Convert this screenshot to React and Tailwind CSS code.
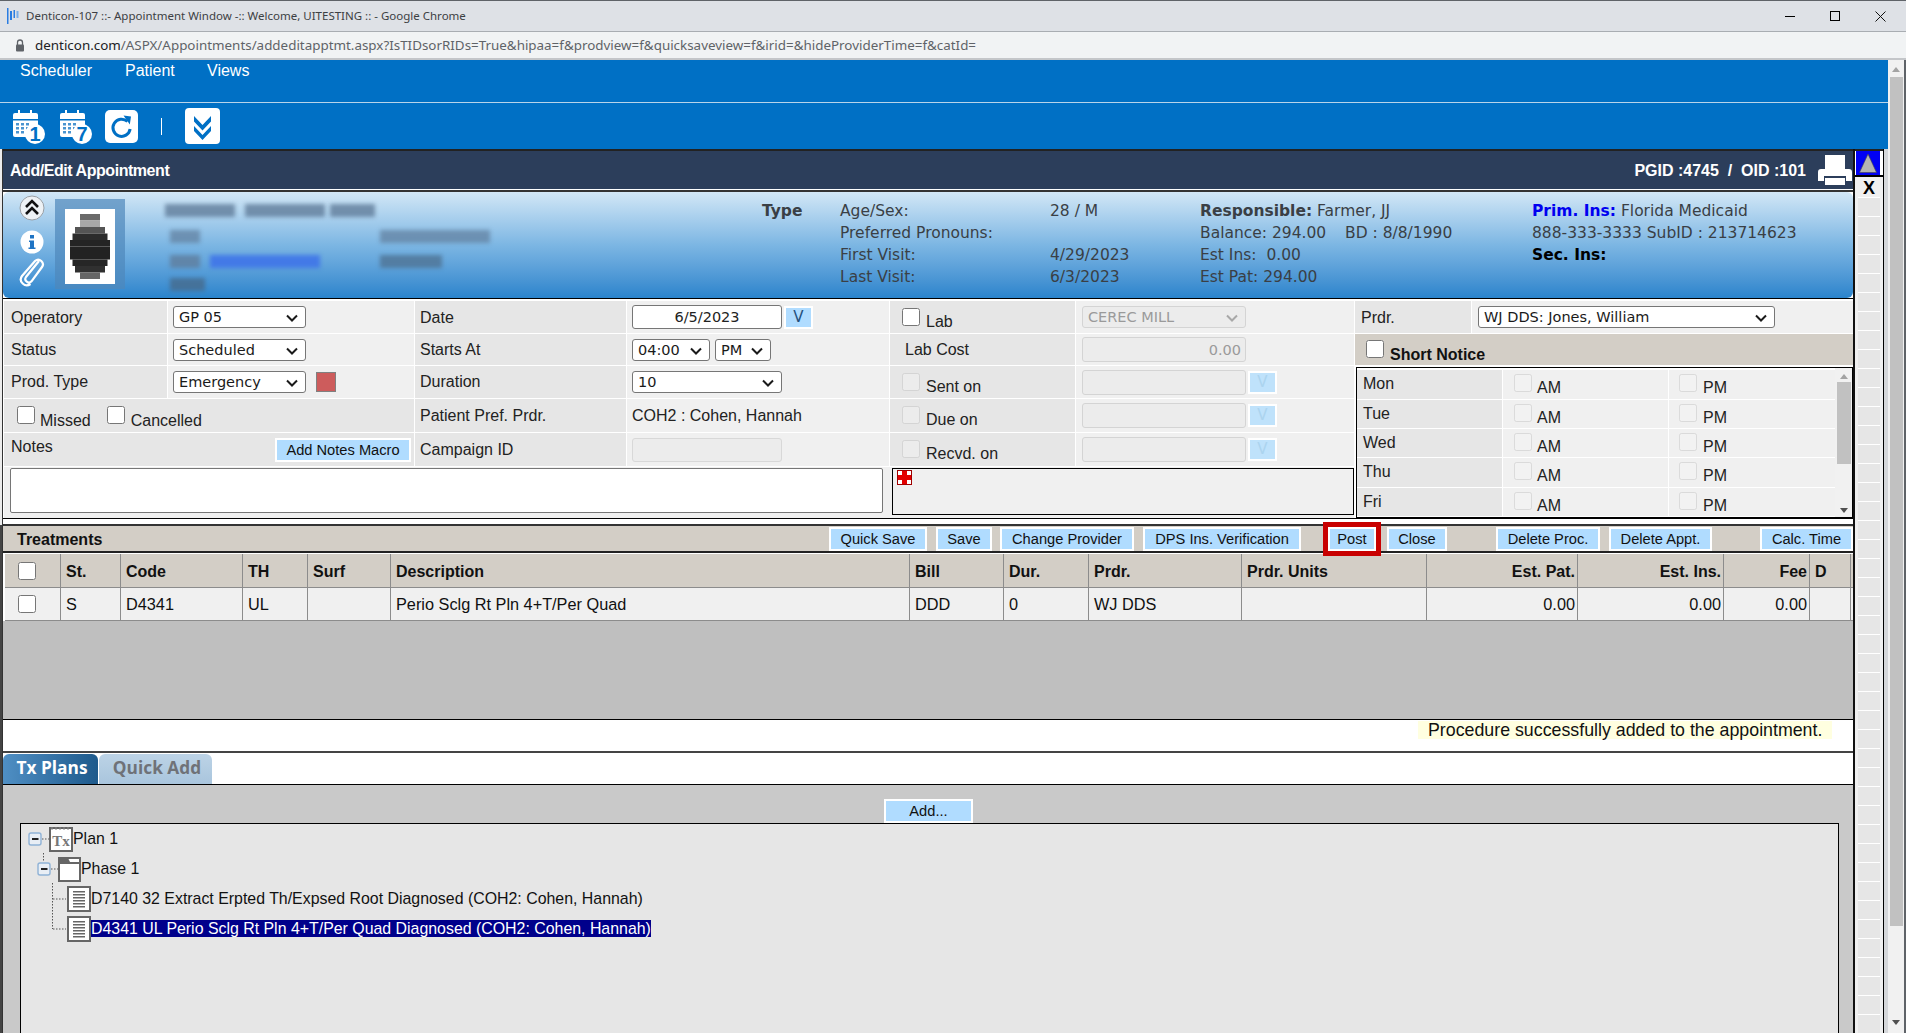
import React from "react"

const tahoma = "font-['DejaVu_Sans',sans-serif]"
const arial = "font-['Liberation_Sans',Arial,sans-serif]"

function Sel({ value, className = "", disabled = false, options }) {
  return (
    <div className={`relative h-[22px] ${className}`}>
      <select
        disabled={disabled}
        defaultValue={value}
        className={`block h-full w-full appearance-none rounded-[3px] border pl-[5px] text-[14.5px] ${tahoma} ${disabled ? "border-[#d4d4d4] bg-[#ececec] text-[#9a9a9a]" : "border-[#767676] bg-white text-[#1a1a1a]"}`}
      >
        {(options || [value]).map(o => <option key={o}>{o}</option>)}
      </select>
      <svg width="12" height="8" viewBox="0 0 12 8" className="absolute right-[8px] top-[8px] block">
        <path d="M1 1.500l5 5 5-5" fill="none" stroke={disabled ? "#a8a8a8" : "#1a1a1a"} strokeWidth="2" />
      </svg>
    </div>
  )
}

function Check({ label, disabled = false, className = "", textTop = "mt-[5px]", gap = "ml-[6px]" }) {
  return (
    <label className={`flex items-start ${className}`}>
      <input type="checkbox" disabled={disabled} className={`m-0 h-[18px] w-[18px] shrink-0 ${disabled ? "opacity-60" : ""}`} />
      <span className={`${gap} ${textTop} text-[16px] leading-[18px]`}>{label}</span>
    </label>
  )
}

function Btn({ children, className = "" }) {
  return (
    <button className={`flex h-[24px] items-center justify-center border-2 border-white bg-[#b0dcff] pt-px text-[14.67px] leading-none text-[#111] ${className}`}>
      {children}
    </button>
  )
}

function VBtn({ disabled = false }) {
  return (
    <div className={`ml-[2px] flex h-[23px] w-[29px] items-center justify-center border-2 border-white text-[15px] ${tahoma} ${disabled ? "bg-[#bfe2fb] text-[#acd4ef]" : "bg-[#b0dcff] text-[#23507c]"}`}>V</div>
  )
}

function Label({ children, className = "" }) {
  return <div className={`flex items-center bg-[#e6e6e6] ${className}`}>{children}</div>
}

function Value({ children, className = "" }) {
  return <div className={`flex items-center bg-[#f0f0f0] ${className}`}>{children}</div>
}

function CalIcon({ n }) {
  return (
    <svg width="33" height="35" viewBox="0 0 33 35" className="block">
      <rect x="1" y="4" width="25" height="24" rx="2" fill="#fff" />
      <rect x="6" y="1" width="2" height="6" fill="#fff" />
      <rect x="18" y="1" width="2" height="6" fill="#fff" />
      <rect x="1" y="10" width="25" height="1.5" fill="#0070c5" />
      {[14, 18, 22].map(y => [4, 9, 14].map(x => <rect key={`${x}${y}`} x={x} y={y} width="3" height="2.5" fill="#4a94d0" />))}
      <circle cx="23" cy="25" r="10" fill="#fff" />
      <text x="23" y="32" textAnchor="middle" fontFamily="Liberation Sans" fontWeight="700" fontSize="20" fill="#0070c5">{n}</text>
    </svg>
  )
}

function RefreshIcon() {
  return (
    <svg width="33" height="33" viewBox="0 0 33 33" className="block">
      <rect width="33" height="33" rx="5" fill="#fff" />
      <path d="M22.500 11.500a8.600 8.600 0 1 0 2.600 7.500" fill="none" stroke="#0070c5" strokeWidth="3" />
      <path d="M18.500 5.500l7.500 1-1.200 8z" fill="#0070c5" />
    </svg>
  )
}

function DownIcon() {
  return (
    <svg width="35" height="36" viewBox="0 0 35 36" className="block">
      <rect width="35" height="36" rx="4" fill="#fff" />
      <path d="M9 8l8.500 9 8.500-9v5.500l-8.500 9-8.500-9z" fill="#0070c5" />
      <path d="M9 18l8.500 9 8.500-9v5l-8.500 9-8.500-9z" fill="#0070c5" />
    </svg>
  )
}

function Printer() {
  return (
    <svg width="34" height="32" viewBox="0 0 34 32" className="block">
      <rect x="7" y="1" width="20" height="15" fill="#fff" />
      <path d="M3 15h28a3 3 0 0 1 3 3v9h-6v-5H6v5H0v-9a3 3 0 0 1 3-3z" fill="#fff" />
      <rect x="7" y="24" width="20" height="7" fill="#fff" />
    </svg>
  )
}

function PatientPhoto() {
  const cells = [
    [2, 0, 4, "#6a6a6a"], [2, 1, 4, "#a8a8a8"], [1, 2, 6, "#555"], [0.5, 3, 7, "#2c2c2c"],
    [0, 4, 8, "#242424"], [0, 5, 8, "#222"], [0, 6, 8, "#222"], [0.5, 7, 7, "#262626"], [1, 8, 6, "#303030"], [2, 9, 4, "#666"],
  ]
  return (
    <svg width="70" height="90" viewBox="0 0 70 90" className="block">
      <rect width="70" height="90" fill="#4e88ba" opacity="0.7" />
      <rect x="10" y="10" width="50" height="75" fill="#fff" />
      <g>
        {cells.map(([x, y, w, c], i) => <rect key={i} x={15 + x * 5} y={15 + y * 6.500} width={w * 5} height="6.500" fill={c} />)}
      </g>
    </svg>
  )
}

function Smudge({ w, color = "bg-[#56718f]/70", className = "" }) {
  return <span className={`inline-block h-[13px] blur-[2px] ${color} ${className}`} style={{ width: w }} />
}

function PatientHeader() {
  return (
    <div className={`flex h-[106px] rounded-[6px] bg-gradient-to-b from-[#d2e7f6] via-[#7cb6e3] to-[#2a84cc] text-[15.5px] leading-[22px] text-[#3a3f45] ${tahoma}`}>
      <div className="flex w-[52px] shrink-0 flex-col items-center pl-[5px] pt-[3px]">
        <svg width="26" height="26" viewBox="0 0 26 26" className="block">
          <circle cx="13" cy="13" r="12" fill="#eef2f5" stroke="#9aa0a6" />
          <path d="M7 12l6-6 6 6M7 19l6-6 6 6" fill="none" stroke="#111" strokeWidth="2.600" />
        </svg>
        <svg width="24" height="24" viewBox="0 0 24 24" className="mt-[9px] block">
          <circle cx="12" cy="12" r="11.500" fill="#fff" />
          <rect x="10" y="5" width="4" height="3.500" fill="#1f74c4" />
          <path d="M9 10.500h5v7h1.500V19h-7v-1.500H10v-5.500H9z" fill="#1f74c4" />
        </svg>
        <svg width="26" height="32" viewBox="0 0 26 32" className="mt-[3px] block">
          <path d="M21 6L8 22a3.500 3.500 0 0 0 5.500 4.300L24 12c3-4-2.500-10-7-6L4 21c-4 5.500 3 12 8.500 8" fill="none" stroke="#fff" strokeWidth="2.200" transform="translate(-1 -2)" />
        </svg>
      </div>
      <div className="w-[70px] shrink-0 pt-[7px]"><PatientPhoto /></div>
      <div className="flex w-[637px] shrink-0 flex-col pt-[12px]">
        <div className="flex h-[20px] items-start pl-[40px]"><Smudge w={70} /><Smudge w={80} className="ml-[10px]" /><Smudge w={45} className="ml-[5px]" /></div>
        <div className="flex h-[25px] items-center pl-[45px]"><Smudge w={30} color="bg-[#5f7d9c]/70" /><Smudge w={110} color="bg-[#5f7d9c]/70" className="ml-[180px]" /></div>
        <div className="flex h-[25px] items-center pl-[45px]"><Smudge w={30} color="bg-[#5f7d9c]/80" /><Smudge w={110} color="bg-[#3f74e8]/90" className="ml-[10px]" /><Smudge w={62} color="bg-[#4f7393]/80" className="ml-[60px]" /></div>
        <div className="flex h-[20px] items-center pl-[45px]"><Smudge w={35} color="bg-[#466a8c]/80" /></div>
      </div>
      <div className="w-[78px] shrink-0 pt-[8px] font-bold">Type</div>
      <div className="w-[210px] shrink-0 pt-[8px]">
        <div>Age/Sex:</div>
        <div>Preferred Pronouns:</div>
        <div>First Visit:</div>
        <div>Last Visit:</div>
      </div>
      <div className="w-[150px] shrink-0 pt-[8px]">
        <div>28 / M</div>
        <div className="h-[22px]" />
        <div>4/29/2023</div>
        <div>6/3/2023</div>
      </div>
      <div className="w-[332px] shrink-0 pt-[8px]">
        <div><span className="font-bold">Responsible:</span> Farmer, JJ</div>
        <div className="flex"><span className="w-[145px]">Balance: 294.00</span><span>BD : 8/8/1990</span></div>
        <div>Est Ins:&nbsp; 0.00</div>
        <div>Est Pat: 294.00</div>
      </div>
      <div className="pt-[8px]">
        <div><span className="font-bold text-[#0000f0]">Prim. Ins:</span> Florida Medicaid</div>
        <div>888-333-3333 SubID : 213714623</div>
        <div className="font-bold text-black">Sec. Ins:</div>
      </div>
    </div>
  )
}

function FormGrid() {
  return (
    <div className="grid w-[1350px] grid-cols-[163px_246px_211px_262px_185px_278px] grid-rows-[32px_31px_32px_33px_33px] gap-px text-[16px] text-[#222]">
      <Label className="pl-[7px] pt-[2px]">Operatory</Label>
      <Value className="pl-[5px]"><Sel value="GP 05" className="w-[133px]" /></Value>
      <Label className="pl-[5px] pt-[2px]">Date</Label>
      <Value className="pl-[5px]">
        <input readOnly value="6/5/2023" className={`h-[24px] w-[150px] rounded-[3px] border border-[#767676] bg-white text-center text-[14.5px] text-[#222] ${tahoma}`} />
        <VBtn />
      </Value>
      <Label className="items-start pl-[12px] pt-[7px]"><Check label="Lab" /></Label>
      <Value className="pl-[6px]"><Sel disabled value="CEREC MILL" className="w-[164px]" /></Value>

      <Label className="pl-[7px]">Status</Label>
      <Value className="pl-[5px]"><Sel value="Scheduled" className="w-[133px]" /></Value>
      <Label className="pl-[5px]">Starts At</Label>
      <Value className="pl-[5px]">
        <Sel value="04:00" className="w-[78px]" />
        <Sel value="PM" className="ml-[5px] w-[56px]" />
      </Value>
      <Label className="pl-[15px]">Lab Cost</Label>
      <Value className="pl-[6px]">
        <input disabled value="0.00" className={`h-[25px] w-[164px] rounded-[3px] border border-[#d4d4d4] bg-[#ececec] pr-[4px] text-right text-[14.5px] text-[#9a9a9a] ${tahoma}`} />
      </Value>

      <Label className="pl-[7px]">Prod. Type</Label>
      <Value className="pl-[5px]">
        <Sel value="Emergency" className="w-[133px]" />
        <div className="ml-[10px] h-[20px] w-[20px] border border-[#808080] bg-[#cd5c5c]" />
      </Value>
      <Label className="pl-[5px]">Duration</Label>
      <Value className="pl-[5px]"><Sel value="10" className="w-[150px]" /></Value>
      <Label className="items-start pl-[12px] pt-[7px]"><Check disabled label="Sent on" /></Label>
      <Value className="pl-[6px]">
        <div className="h-[25px] w-[164px] rounded-[3px] border border-[#d4d4d4] bg-[#ececec]" />
        <VBtn disabled />
      </Value>

      <Label className="col-span-2 items-start pl-[13px] pt-[7px]">
        <Check label="Missed" gap="ml-[5px]" textTop="mt-[6px]" />
        <Check label="Cancelled" gap="ml-[6px]" textTop="mt-[6px]" className="ml-[16px]" />
      </Label>
      <Label className="pl-[5px]">Patient Pref. Prdr.</Label>
      <Value className="pl-[5px]">COH2 : Cohen, Hannah</Value>
      <Label className="items-start pl-[12px] pt-[7px]"><Check disabled label="Due on" /></Label>
      <Value className="pl-[6px]">
        <div className="h-[25px] w-[164px] rounded-[3px] border border-[#d4d4d4] bg-[#ececec]" />
        <VBtn disabled />
      </Value>

      <Label className="col-span-2 justify-between pl-[7px] pr-[3px]">
        <span className="-mt-[6px]">Notes</span>
        <Btn className="w-[136px]">Add Notes Macro</Btn>
      </Label>
      <Label className="pl-[5px]">Campaign ID</Label>
      <Value className="pl-[5px]">
        <div className="h-[24px] w-[150px] rounded-[3px] border border-[#d8d8d8] bg-[#ececec]" />
      </Value>
      <Label className="items-start pl-[12px] pt-[7px]"><Check disabled label="Recvd. on" /></Label>
      <Value className="pl-[6px]">
        <div className="h-[25px] w-[164px] rounded-[3px] border border-[#d4d4d4] bg-[#ececec]" />
        <VBtn disabled />
      </Value>
    </div>
  )
}

function RedCross() {
  return (
    <svg width="15" height="15" viewBox="0 0 15 15" className="ml-[4px] mt-px block">
      <rect x="0.500" y="0.500" width="14" height="14" fill="#fff" stroke="#a00000" />
      <rect x="5" y="1" width="5" height="13" fill="#e30000" />
      <rect x="1" y="5" width="13" height="5" fill="#e30000" />
    </svg>
  )
}

const DAYS = ["Mon", "Tue", "Wed", "Thu", "Fri"]

function DayGrid() {
  return (
    <div className="flex h-[151px] border border-black bg-white">
      <div className="grid w-[478px] grid-cols-[145px_165px_166px] grid-rows-[29px_28px_28px_29px_28px] gap-x-px gap-y-px pt-[2px] text-[16px] text-[#222]">
        {DAYS.map(d => (
          <React.Fragment key={d}>
            <Label className="items-start pl-[6px] pt-[2px]">{d}</Label>
            <Value className="items-start pl-[11px] pt-[4px]"><Check disabled label="AM" gap="ml-[5px]" /></Value>
            <Value className="items-start pl-[10px] pt-[4px]"><Check disabled label="PM" gap="ml-[6px]" /></Value>
          </React.Fragment>
        ))}
      </div>
      <div className="flex w-[17px] flex-col items-center bg-[#f1f1f1]">
        <span className="mt-[6px] h-0 w-0 border-x-[4px] border-b-[5px] border-x-transparent border-b-[#a3a3a3]" />
        <span className="mt-[3px] h-[82px] w-[14px] bg-[#c1c1c1]" />
        <span className="mt-auto mb-[4px] h-0 w-0 border-x-[4px] border-t-[5px] border-x-transparent border-t-[#505050]" />
      </div>
    </div>
  )
}

function FormRight() {
  return (
    <div className="ml-px flex w-[498px] flex-col text-[16px] text-[#222]">
      <div className="flex h-[32px] gap-px">
        <Label className="w-[116px] pl-[6px] pt-[2px]">Prdr.</Label>
        <Value className="flex-1 pl-[6px]"><Sel value="WJ DDS: Jones, William" className="w-[297px]" /></Value>
      </div>
      <label className="mt-px flex h-[31px] items-start bg-[#d3cec6] pl-[11px] pt-[6px]">
        <input type="checkbox" className="m-0 h-[18px] w-[18px]" />
        <span className="ml-[6px] mt-[6px] text-[16px] font-bold leading-[18px] text-[#111]">Short Notice</span>
      </label>
      <div className="mt-[2px] ml-px"><DayGrid /></div>
    </div>
  )
}

const COLS = "grid grid-cols-[56px_60px_122px_65px_83px_519px_94px_85px_153px_185px_151px_146px_86px_41px]"

const HEAD = [
  ["St."], ["Code"], ["TH"], ["Surf"], ["Description"], ["Bill"], ["Dur."], ["Prdr."], ["Prdr. Units"],
  ["Est. Pat.", 1], ["Est. Ins.", 1], ["Fee", 1], ["D"],
]
const ROW = [
  ["S"], ["D4341"], ["UL"], [""], ["Perio Sclg Rt Pln 4+T/Per Quad"], ["DDD"], ["0"], ["WJ DDS"], [""],
  ["0.00", 1], ["0.00", 1], ["0.00", 1], [""],
]

function TableRow({ cells, bold, bg, h, text }) {
  return (
    <div className={`${COLS} ${h} border-b border-[#8c8c8c] ${bg} ${text} text-[#111] ${bold ? "font-bold" : ""}`}>
      <div className="flex items-center justify-center border-r border-[#8c8c8c] pr-[12px]">
        <input type="checkbox" className="m-0 h-[18px] w-[18px]" />
      </div>
      {cells.map(([t, right], i) => (
        <div key={i} className={`flex items-center border-r border-[#8c8c8c] ${right ? "justify-end pr-[2px]" : "pl-[5px]"} ${bold ? "pt-[2px]" : ""}`}>{t}</div>
      ))}
    </div>
  )
}

function TreeRow({ icon, iconWidth, text, selected }) {
  return (
    <div className="flex h-[30px] items-center">
      <svg width={iconWidth} height="30" viewBox={`0 0 ${iconWidth} 30`} className="block shrink-0">{icon}</svg>
      <span className={`whitespace-nowrap text-[15.9px] leading-[17px] ${selected ? "bg-[#00008b] text-white" : "text-[#111]"}`}>{text}</span>
    </div>
  )
}

function MinusBox({ x }) {
  return (
    <g>
      <rect x={x} y="10" width="12" height="12" rx="2" fill="#e8eef5" stroke="#8fb2d6" strokeWidth="1.400" />
      <rect x={x + 3} y="15" width="6.500" height="2" fill="#222" />
    </g>
  )
}

function DocIcon() {
  return (
    <g>
      <rect x="47" y="4" width="22" height="24" fill="#fff" stroke="#666" strokeWidth="2" />
      {[8, 11, 14, 17, 20, 23].map(y => <rect key={y} x="52" y={y} width="12" height="1.500" fill="#666" />)}
    </g>
  )
}

const dots = { fill: "none", stroke: "#555", strokeDasharray: "1.5 1.5" }

function Tree() {
  return (
    <div className="-mt-px">
      <TreeRow
        iconWidth={52}
        text="Plan 1"
        icon={
          <g>
            <MinusBox x={8} />
            <path d="M21 16h7" {...dots} />
            <rect x="29" y="5" width="22" height="23" fill="#fff" stroke="#666" strokeWidth="2" />
            <path d="M31 4v3M35 4v3M39 4v3M43 4v3M47 4v3" stroke="#888" />
            <text x="40" y="23" textAnchor="middle" fontFamily="Liberation Serif" fontWeight="700" fontSize="15" fill="#777">Tx</text>
          </g>
        }
      />
      <TreeRow
        iconWidth={60}
        text="Phase 1"
        icon={
          <g>
            <path d="M22.500 0v9" {...dots} />
            <MinusBox x={17} />
            <path d="M30 16h7" {...dots} />
            <rect x="38" y="5" width="21" height="23" fill="#fff" stroke="#666" strokeWidth="2" />
            <path d="M38 5h9l2 4h10v2H38z" fill="#666" />
          </g>
        }
      />
      <TreeRow
        iconWidth={70}
        text="D7140 32 Extract Erpted Th/Expsed Root Diagnosed (COH2: Cohen, Hannah)"
        icon={
          <g>
            <path d="M31.500 0v30M32 16h13" {...dots} />
            <DocIcon />
          </g>
        }
      />
      <TreeRow
        iconWidth={70}
        selected
        text="D4341 UL Perio Sclg Rt Pln 4+T/Per Quad Diagnosed (COH2: Cohen, Hannah)"
        icon={
          <g>
            <path d="M31.500 0v16M32 16h13" {...dots} />
            <DocIcon />
          </g>
        }
      />
    </div>
  )
}

function SideStrip() {
  return (
    <div className="flex w-[29px] shrink-0 flex-col border-r border-black bg-[#f0f0f0]">
      <div className="h-[2px] bg-[#222]" />
      <div className="flex h-[26px] shrink-0 border-b-2 border-black bg-white pl-px">
        <div className="flex w-[24px] items-center justify-center bg-[#0000f5]">
          <svg width="18" height="20" viewBox="0 0 18 20" className="block"><path d="M9 1L17.500 19.500H.5z" fill="#b4b4b4" stroke="#444" strokeWidth="0.600" /></svg>
        </div>
      </div>
      <div className={`flex h-[20px] shrink-0 items-center justify-center pt-[3px] text-[18px] font-bold text-black ${arial}`}>X</div>
      <div className="flex flex-col overflow-hidden px-[3px]">
        {Array.from({ length: 45 }, (_, i) => (
          <div key={i} className="h-[19px] shrink-0 border-t border-white bg-[#e6e6e6]" />
        ))}
      </div>
    </div>
  )
}

export default function App() {
  return (
    <div className={`flex h-[1033px] w-[1906px] flex-col overflow-hidden bg-white ${arial}`}>
      {/* Chrome title bar */}
      <div className="flex h-[32px] shrink-0 items-center border-y border-t-[#5f6368] border-b-[#a9adb2] bg-[#dee1e6] pl-[7px]">
        <svg width="12" height="16" viewBox="0 0 12 16" className="block shrink-0">
          <rect x="0" y="0" width="1.500" height="16" fill="#2a7de1" />
          <rect x="3" y="3" width="2" height="9" fill="#2a7de1" />
          <rect x="6.500" y="2" width="1.500" height="8" fill="#2a7de1" />
          <rect x="9.500" y="3" width="2" height="7" fill="#7aaee8" />
        </svg>
        <span className="ml-[7px] font-['Noto_Sans',sans-serif] text-[11.5px] text-[#3c4043]">Denticon-107 ::- Appointment Window -:: Welcome, UITESTING :: - Google Chrome</span>
        <div className="ml-auto flex items-center gap-[35px] pr-[20px]">
          <span className="h-px w-[10px] bg-black" />
          <span className="h-[10px] w-[10px] border border-black" />
          <svg width="11" height="11" viewBox="0 0 11 11" className="block"><path d="M.5.5l10 10M10.500.5l-10 10" stroke="#111" /></svg>
        </div>
      </div>
      {/* URL bar */}
      <div className="flex h-[28px] shrink-0 items-center border-b-2 border-[#c4c6c9] bg-[#f1f3f4] pl-[15px] font-['Noto_Sans',sans-serif] text-[13.4px] text-[#5f6368]">
        <svg width="10" height="13" viewBox="0 0 10 13" className="block shrink-0">
          <path d="M2.500 6V3.500a2.500 2.500 0 0 1 5 0V6" fill="none" stroke="#5f6368" strokeWidth="1.300" />
          <rect x="1" y="5.500" width="8" height="7" rx="1" fill="#5f6368" />
        </svg>
        <span className="ml-[10px] text-[#202124]">denticon.com</span>
        <span>/ASPX/Appointments/addeditapptmt.aspx?IsTIDsorRIDs=True&amp;hipaa=f&amp;prodview=f&amp;quicksaveview=f&amp;irid=&amp;hideProviderTime=f&amp;catId=</span>
      </div>

      <div className="flex min-h-0 flex-1">
        <div className="flex w-[1888px] shrink-0 flex-col">
          {/* Menu */}
          <div className="flex h-[43px] shrink-0 items-start border-b border-[#b9d4ea] bg-[#0070c5] pl-[20px] pt-px text-[16px] leading-[20px] text-white">
            <span className="w-[105px]">Scheduler</span>
            <span className="w-[82px]">Patient</span>
            <span>Views</span>
          </div>
          {/* Toolbar */}
          <div className="flex h-[46px] shrink-0 items-center bg-[#0070c5] pl-[12px]">
            <CalIcon n="1" />
            <div className="ml-[14px]"><CalIcon n="7" /></div>
            <div className="ml-[13px]"><RefreshIcon /></div>
            <span className="ml-[23px] h-[17px] w-px bg-white" />
            <div className="ml-[23px]"><DownIcon /></div>
          </div>

          <div className="flex min-h-0 flex-1">
            {/* Left edge: pale beside the form, dark from the treatments bar down */}
            <div className="flex w-[2px] shrink-0 flex-col">
              <div className="h-[376px] bg-[#ececec]" />
              <div className="flex-1 bg-[#444]" />
            </div>
            <div className="flex w-[1853px] shrink-0 flex-col border-l border-r-2 border-l-[#333] border-r-[#111]">
              <div className="h-[2px] shrink-0 bg-[#222]" />
              {/* Title */}
              <div className="flex h-[38px] shrink-0 items-center bg-[#2c3e5b] pl-[7px] text-[16px] font-bold text-white">
                <span className="pt-[2px] tracking-[-0.45px]">Add/Edit Appointment</span>
                <span className="ml-auto pt-[2px]">PGID :4745&nbsp; /&nbsp; OID :101</span>
                <div className="ml-[12px] mr-px"><Printer /></div>
              </div>
              <div className="h-px shrink-0 bg-white" />
              <div className="h-[2px] shrink-0 bg-[#333]" />
              <PatientHeader />
              <div className="h-px shrink-0 bg-black" />
              <div className="h-[2px] shrink-0 bg-white" />

              {/* Appointment form */}
              <div className="flex h-[217px] shrink-0 pl-px">
                <div className="flex flex-col">
                  <FormGrid />
                  <div className="mt-px flex h-[51px] bg-[#f0f0f0]">
                    <div className="ml-[6px] mt-px h-[45px] w-[873px] rounded-[2px] border border-[#767676] bg-white" />
                    <div className="ml-[9px] mt-px h-[47px] w-[462px] border border-black bg-[#f0f0f0]"><RedCross /></div>
                  </div>
                </div>
                <FormRight />
              </div>
              <div className="h-px shrink-0 bg-black" />
              <div className="h-[5px] shrink-0 bg-white" />
              <div className="h-[2px] shrink-0 bg-[#333]" />

              {/* Treatments */}
              <div className="flex h-[25px] shrink-0 items-center bg-[#d3cec6] pl-[14px]">
                <span className="pt-[2px] text-[16px] font-bold text-[#111]">Treatments</span>
                <Btn className="ml-auto w-[98px]">Quick Save</Btn>
                <Btn className="ml-[9px] w-[56px]">Save</Btn>
                <Btn className="ml-[8px] w-[134px]">Change Provider</Btn>
                <Btn className="ml-[9px] w-[158px]">DPS Ins. Verification</Btn>
                <Btn className="relative ml-[27px] w-[48px] border-0 outline-[5px] outline-[#c80000]">Post</Btn>
                <Btn className="ml-[11px] w-[60px]">Close</Btn>
                <Btn className="ml-[49px] w-[104px]">Delete Proc.</Btn>
                <Btn className="ml-[9px] w-[103px]">Delete Appt.</Btn>
                <Btn className="ml-[48px] w-[93px]">Calc. Time</Btn>
              </div>
              <div className="h-[2px] shrink-0 bg-[#222]" />
              <div className="h-px shrink-0 bg-white" />

              {/* Procedures table */}
              <div className="shrink-0 pl-[2px]">
                <TableRow cells={HEAD} bold bg="bg-[#d3cec6]" h="h-[34px]" text="text-[16px]" />
                <TableRow cells={ROW} bg="bg-[#f0f0f0]" h="h-[33px]" text="text-[16.3px]" />
              </div>
              <div className="h-[98px] shrink-0 bg-[#bfbfbf]" />
              <div className="h-px shrink-0 bg-black" />
              <div className="flex h-[31px] shrink-0 items-start justify-end bg-white pr-[21px]">
                <div className="mt-px flex h-[18px] w-[414px] items-center bg-[#ffffe0] pl-[10px] text-[17.8px] text-[#111]">Procedure successfully added to the appointment.</div>
              </div>
              <div className="h-[2px] shrink-0 bg-[#444]" />

              {/* Tabs */}
              <div className="flex h-[31px] shrink-0 items-end bg-white">
                <div className="flex h-[30px] w-[95px] items-center justify-center rounded-t-[6px] bg-gradient-to-r from-[#4f8fc4] to-[#1e5a8c] pb-[2px] pl-[3px] font-['Open_Sans',sans-serif] text-[17.3px] font-bold text-white">Tx Plans</div>
                <div className="ml-px flex h-[30px] w-[113px] items-center justify-center rounded-t-[6px] bg-gradient-to-b from-[#bcd3e6] to-[#a9c5dd] pb-[2px] pl-[3px] font-['Open_Sans',sans-serif] text-[17.3px] font-bold text-[#6f7278]">Quick Add</div>
              </div>
              <div className="flex min-h-0 flex-1 flex-col border-t border-black bg-[#c9c9c9]">
                <div className="flex h-[38px] shrink-0 items-end justify-center pl-[1px]">
                  <Btn className="w-[89px]">Add...</Btn>
                </div>
                <div className="ml-[17px] mr-[14px] min-h-0 flex-1 border-l border-t border-r border-black bg-[#e6e6e6]"><Tree /></div>
              </div>
            </div>
            <SideStrip />
            <div className="w-[4px] shrink-0 bg-[#d5d7da]" />
          </div>
        </div>
        {/* Page scrollbar */}
        <div className="flex w-[18px] shrink-0 flex-col items-start border-r-2 border-[#5f6368] bg-[#f1f1f1] pl-[2px]">
          <span className="ml-[2px] mt-[7px] h-0 w-0 border-x-[4px] border-b-[5px] border-x-transparent border-b-[#a3a3a3]" />
          <span className="mt-[5px] h-[849px] w-[13px] shrink-0 bg-[#c1c1c1]" />
          <span className="ml-[2px] mt-auto mb-[8px] h-0 w-0 border-x-[4px] border-t-[5px] border-x-transparent border-t-[#505050]" />
        </div>
      </div>
    </div>
  )
}
